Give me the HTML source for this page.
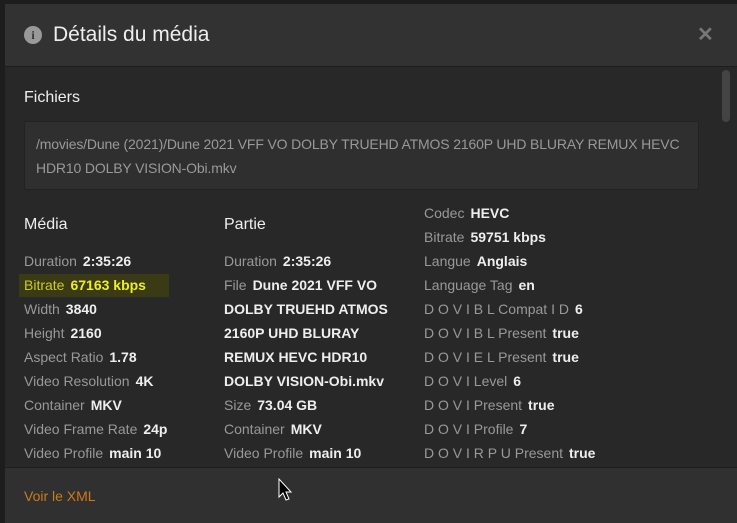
<!DOCTYPE html>
<html><head><meta charset="utf-8"><style>
*{margin:0;padding:0;box-sizing:border-box}
body{width:737px;height:523px;background:#1d1d1d;font-family:"Liberation Sans",sans-serif;overflow:hidden;position:relative;font-size:14px}
.modal{position:absolute;left:5px;top:4px;width:732px;height:519px;background:#282828}
.hdr{position:absolute;left:0;top:0;width:732px;height:63px;background:#323232;border-bottom:1px solid #1e1e1e}
.hdr h1{position:absolute;left:48px;top:19px;font-weight:normal;color:#eee;font-size:21px}
.info{position:absolute;left:19px;top:22px;width:18px;height:18px;border-radius:50%;background:#999;color:#323232;font:bold 12px "Liberation Serif",serif;text-align:center;line-height:18px}
.x{position:absolute;left:692px;top:18px;color:#777;font:bold 20px "Liberation Sans",sans-serif}
.t{position:absolute;white-space:nowrap;line-height:24px;color:#999}
.t b{color:#eee;font-weight:bold;margin-left:6px}
.w{color:#eee;font-weight:bold}
.foot{position:absolute;left:0;top:463px;width:732px;height:56px;background:#303030;border-top:1px solid #1e1e1e}
</style></head><body>
<div class="modal">
<div class="hdr"><div class="info">i</div><h1>Détails du média</h1><div class="x">✕</div></div>
<div style="position:absolute;left:717px;top:66px;width:8px;height:52px;border-radius:4px;background:#444"></div>
<div class="t" style="left:19px;top:82px;color:#eee;font-size:16px">Fichiers</div>
<div style="position:absolute;left:19px;top:117px;width:675px;height:69px;background:#2f2f2f;border:1px solid #222;border-radius:2px"></div>
<div class="t" style="left:31px;top:128px;color:#999;letter-spacing:-0.15px">/movies/Dune (2021)/Dune 2021 VFF VO DOLBY TRUEHD ATMOS 2160P UHD BLURAY REMUX HEVC</div>
<div class="t" style="left:31px;top:152px;color:#999;letter-spacing:-0.15px">HDR10 DOLBY VISION-Obi.mkv</div>
<div class="t" style="left:19px;top:209px;color:#eee;font-size:16px">Média</div>
<div class="t" style="left:219px;top:209px;color:#eee;font-size:16px">Partie</div>
<div style="position:absolute;left:14px;top:270px;width:150px;height:23px;background:#3a3a14"></div>
<div class="t" style="left:19px;top:245px">Duration<b>2:35:26</b></div>
<div class="t" style="left:19px;top:269px;color:#cccc22">Bitrate<b style="color:#eeee22">67163 kbps</b></div>
<div class="t" style="left:19px;top:293px">Width<b>3840</b></div>
<div class="t" style="left:19px;top:317px">Height<b>2160</b></div>
<div class="t" style="left:19px;top:341px">Aspect Ratio<b>1.78</b></div>
<div class="t" style="left:19px;top:365px">Video Resolution<b>4K</b></div>
<div class="t" style="left:19px;top:389px">Container<b>MKV</b></div>
<div class="t" style="left:19px;top:413px">Video Frame Rate<b>24p</b></div>
<div class="t" style="left:19px;top:437px">Video Profile<b>main 10</b></div>
<div class="t" style="left:219px;top:245px">Duration<b>2:35:26</b></div>
<div class="t" style="left:219px;top:269px">File<b>Dune 2021 VFF VO</b></div>
<div class="t w" style="left:219px;top:293px">DOLBY TRUEHD ATMOS</div>
<div class="t w" style="left:219px;top:317px">2160P UHD BLURAY</div>
<div class="t w" style="left:219px;top:341px">REMUX HEVC HDR10</div>
<div class="t w" style="left:219px;top:365px">DOLBY VISION-Obi.mkv</div>
<div class="t" style="left:219px;top:389px">Size<b>73.04 GB</b></div>
<div class="t" style="left:219px;top:413px">Container<b>MKV</b></div>
<div class="t" style="left:219px;top:437px">Video Profile<b>main 10</b></div>
<div class="t" style="left:419px;top:197px">Codec<b>HEVC</b></div>
<div class="t" style="left:419px;top:221px">Bitrate<b>59751 kbps</b></div>
<div class="t" style="left:419px;top:245px">Langue<b>Anglais</b></div>
<div class="t" style="left:419px;top:269px">Language Tag<b>en</b></div>
<div class="t" style="left:419px;top:293px">D O V I B L Compat I D<b>6</b></div>
<div class="t" style="left:419px;top:317px">D O V I B L Present<b>true</b></div>
<div class="t" style="left:419px;top:341px">D O V I E L Present<b>true</b></div>
<div class="t" style="left:419px;top:365px">D O V I Level<b>6</b></div>
<div class="t" style="left:419px;top:389px">D O V I Present<b>true</b></div>
<div class="t" style="left:419px;top:413px">D O V I Profile<b>7</b></div>
<div class="t" style="left:419px;top:437px">D O V I R P U Present<b>true</b></div>
<div class="foot"><div class="t" style="left:19px;top:16px;color:#cc7b19">Voir le XML</div></div>
</div>
<svg style="position:absolute;left:278px;top:478px" width="16" height="26" viewBox="0 0 16 26"><path d="M1 1V19L5 15L8 22L11 21L8 14H13Z" fill="#000" stroke="#fff" stroke-width="1"/></svg>
</body></html>
